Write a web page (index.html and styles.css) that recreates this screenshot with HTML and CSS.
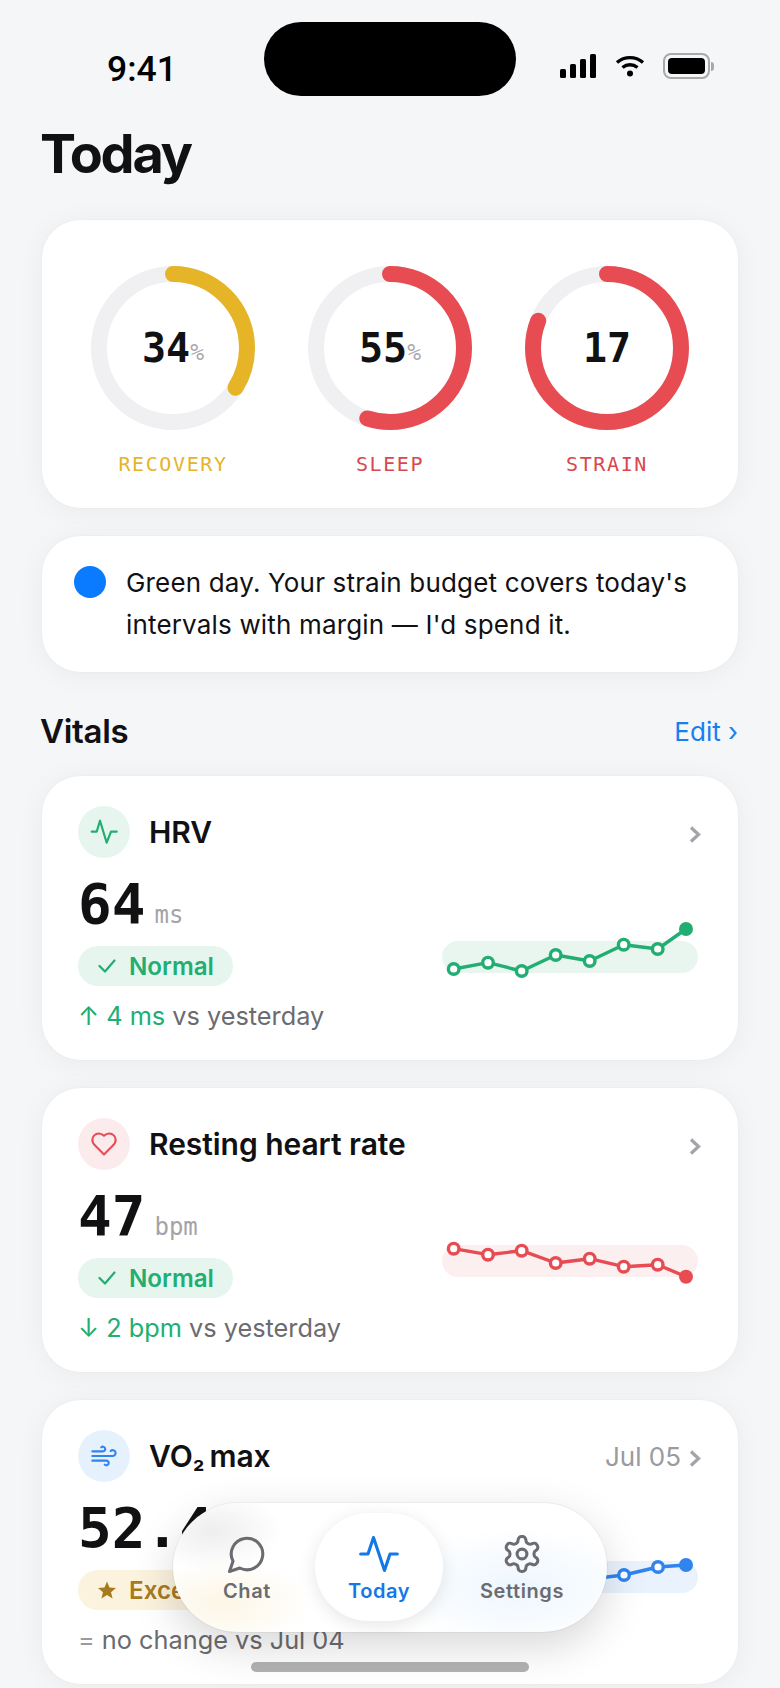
FILE: index.html
```html
<!DOCTYPE html>
<html>
<head>
  <meta charset="utf-8">
  <title>Today</title>
  <link rel="stylesheet" href="styles.css">
</head>
<body>
<div class="screen">

  <!-- status bar -->
  <div class="status-bar">
    <div class="status-time">9:41</div>
    <div class="island"></div>
    <div class="status-icons">
      <svg width="36" height="24" viewBox="0 0 36 24" fill="#000">
        <rect x="0" y="15" width="6" height="9" rx="1.5"/>
        <rect x="10" y="10" width="6" height="14" rx="1.5"/>
        <rect x="20" y="5" width="6" height="19" rx="1.5"/>
        <rect x="30" y="0" width="6" height="24" rx="1.5"/>
      </svg>
      <svg class="wifi" width="30" height="22" viewBox="0 0 30 22" fill="none" stroke="#000" stroke-width="3.4">
        <path d="M2 7.5C9.5 1 20.5 1 28 7.5"/>
        <path d="M7.5 12.5C12 8.8 18 8.8 22.500 12.500"/>
        <circle cx="15" cy="18.500" r="3" fill="#000" stroke="none"/>
      </svg>
      <div class="battery"><div class="battery-fill"></div></div>
      <div class="battery-nub"></div>
    </div>
  </div>

  <div class="content">
    <h1 class="title">Today</h1>

    <!-- score rings -->
    <div class="card score-card">
      <div class="score">
        <div class="ring">
          <svg width="164" height="164" viewBox="0 0 164 164">
            <circle class="ring-track" cx="82" cy="82" r="74"/>
            <circle class="ring-value yellow-stroke" cx="82" cy="82" r="74" pathLength="100" stroke-dasharray="34 100" transform="rotate(-90 82 82)"/>
          </svg>
          <div class="ring-text"><span class="ring-num">34</span><span class="ring-pct">%</span></div>
        </div>
        <div class="score-label yellow-text">RECOVERY</div>
      </div>
      <div class="score">
        <div class="ring">
          <svg width="164" height="164" viewBox="0 0 164 164">
            <circle class="ring-track" cx="82" cy="82" r="74"/>
            <circle class="ring-value red-stroke" cx="82" cy="82" r="74" pathLength="100" stroke-dasharray="55 100" transform="rotate(-90 82 82)"/>
          </svg>
          <div class="ring-text"><span class="ring-num">55</span><span class="ring-pct">%</span></div>
        </div>
        <div class="score-label red-text">SLEEP</div>
      </div>
      <div class="score">
        <div class="ring">
          <svg width="164" height="164" viewBox="0 0 164 164">
            <circle class="ring-track" cx="82" cy="82" r="74"/>
            <circle class="ring-value red-stroke" cx="82" cy="82" r="74" pathLength="100" stroke-dasharray="81 100" transform="rotate(-90 82 82)"/>
          </svg>
          <div class="ring-text"><span class="ring-num">17</span></div>
        </div>
        <div class="score-label red-text">STRAIN</div>
      </div>
    </div>

    <!-- coach message -->
    <div class="card insight">
      <div class="insight-dot"></div>
      <p class="insight-text">Green day. Your strain budget covers today's intervals with margin — I'd spend it.</p>
    </div>

    <div class="section-head">
      <h2 class="section-title">Vitals</h2>
      <div class="section-link">Edit ›</div>
    </div>

    <!-- HRV -->
    <div class="card vital">
      <div class="vital-head">
        <div class="vital-icon green-bg">
          <svg width="52" height="52" viewBox="0 0 52 52" fill="none" stroke="#22AE72" stroke-width="2.200" stroke-linecap="round" stroke-linejoin="round">
            <path d="M13.700 25.700H18.700L22 14.700L28.700 36.700L33 25.700H38.700"/>
          </svg>
        </div>
        <div class="vital-name">HRV</div>
        <svg class="chevron" width="12" height="17" viewBox="0 0 12 17" fill="none"><path d="M2 1.500L9.500 8.500L2 15.500"/></svg>
      </div>
      <div class="vital-body">
        <div class="vital-stats">
          <div class="value-row"><span class="value">64</span><span class="unit">ms</span></div>
          <div class="badge badge-green">
            <svg width="20" height="16" viewBox="0 0 20 16" fill="none" stroke="#22AE72" stroke-width="2.200" stroke-linecap="round" stroke-linejoin="round"><path d="M2.500 8L8 13.500L17.500 2.500"/></svg>
            Normal
          </div>
          <div class="delta"><span class="delta-good">↑ 4 ms</span> vs yesterday</div>
        </div>
        <svg class="spark spark-green" width="264" height="64" viewBox="0 0 264 64" fill="none">
          <rect class="spark-band" x="4" y="21" width="256" height="32" rx="16"/>
          <polyline points="15.700,49 50,42.700 83.700,51 117.700,35 151.700,41 185.700,24.700 219.700,29 248,9"/>
          <circle cx="15.700" cy="49" r="5.300"/><circle cx="50" cy="42.700" r="5.300"/><circle cx="83.700" cy="51" r="5.300"/><circle cx="117.700" cy="35" r="5.300"/><circle cx="151.700" cy="41" r="5.300"/><circle cx="185.700" cy="24.700" r="5.300"/><circle cx="219.700" cy="29" r="5.300"/>
          <circle class="spark-last" cx="248" cy="9" r="7"/>
        </svg>
      </div>
    </div>

    <!-- Resting heart rate -->
    <div class="card vital">
      <div class="vital-head">
        <div class="vital-icon red-bg">
          <svg width="28" height="28" viewBox="0 0 24 24" fill="none" stroke="#E74C53" stroke-width="1.800" stroke-linecap="round" stroke-linejoin="round">
            <path d="M19 14c1.490-1.460 3-3.210 3-5.500A5.500 5.500 0 0 0 16.500 3c-1.760 0-3 .5-4.500 2-1.500-1.500-2.740-2-4.500-2A5.500 5.500 0 0 0 2 8.500c0 2.300 1.500 4.050 3 5.500l7 7Z"/>
          </svg>
        </div>
        <div class="vital-name">Resting heart rate</div>
        <svg class="chevron" width="12" height="17" viewBox="0 0 12 17" fill="none"><path d="M2 1.500L9.500 8.500L2 15.500"/></svg>
      </div>
      <div class="vital-body">
        <div class="vital-stats">
          <div class="value-row"><span class="value">47</span><span class="unit">bpm</span></div>
          <div class="badge badge-green">
            <svg width="20" height="16" viewBox="0 0 20 16" fill="none" stroke="#22AE72" stroke-width="2.200" stroke-linecap="round" stroke-linejoin="round"><path d="M2.500 8L8 13.500L17.500 2.500"/></svg>
            Normal
          </div>
          <div class="delta"><span class="delta-good">↓ 2 bpm</span> vs yesterday</div>
        </div>
        <svg class="spark spark-red" width="264" height="64" viewBox="0 0 264 64" fill="none">
          <rect class="spark-band" x="4" y="13" width="256" height="32" rx="16"/>
          <polyline points="15.700,16.700 50,22.700 83.700,18.700 117.700,31 151.700,26.700 185.700,34.700 219.700,32.700 248,44.700"/>
          <circle cx="15.700" cy="16.700" r="5.300"/><circle cx="50" cy="22.700" r="5.300"/><circle cx="83.700" cy="18.700" r="5.300"/><circle cx="117.700" cy="31" r="5.300"/><circle cx="151.700" cy="26.700" r="5.300"/><circle cx="185.700" cy="34.700" r="5.300"/><circle cx="219.700" cy="32.700" r="5.300"/>
          <circle class="spark-last" cx="248" cy="44.700" r="7"/>
        </svg>
      </div>
    </div>

    <!-- VO2 max -->
    <div class="card vital">
      <div class="vital-head">
        <div class="vital-icon blue-bg">
          <svg width="28" height="28" viewBox="0 0 24 24" fill="none" stroke="#2F84EE" stroke-width="1.800" stroke-linecap="round" stroke-linejoin="round">
            <path d="M17.700 7.700a2.500 2.500 0 1 1 1.800 4.300H2"/>
            <path d="M9.600 4.600A2 2 0 1 1 11 8H2"/>
            <path d="M12.600 19.400A2 2 0 1 0 14 16H2"/>
          </svg>
        </div>
        <div class="vital-name">VO<span class="vital-sub">₂</span> max</div>
        <div class="vital-date">Jul 05</div>
        <svg class="chevron" width="12" height="17" viewBox="0 0 12 17" fill="none"><path d="M2 1.500L9.500 8.500L2 15.500"/></svg>
      </div>
      <div class="vital-body">
        <div class="vital-stats">
          <div class="value-row"><span class="value">52.4</span><span class="unit">ml/kg</span></div>
          <div class="badge badge-gold">
            <svg width="20" height="18" viewBox="0 0 20 18" fill="#A87A1E"><path d="M10 0.500L12.500 6.500L19 7L14 11.200L15.600 17.500L10 14.100L4.400 17.500L6 11.200L1 7L7.500 6.500Z"/></svg>
            Excellent
          </div>
          <div class="delta"><span class="delta-flat">=</span> no change vs Jul 04</div>
        </div>
        <svg class="spark spark-blue" width="264" height="64" viewBox="0 0 264 64" fill="none">
          <rect class="spark-band" x="4" y="17" width="256" height="32" rx="16"/>
          <polyline points="15.700,41 50,39 83.700,37 117.700,39 151.700,35 186,31 220,23 248,21"/>
          <circle cx="15.700" cy="41" r="5.300"/><circle cx="50" cy="39" r="5.300"/><circle cx="83.700" cy="37" r="5.300"/><circle cx="117.700" cy="39" r="5.300"/><circle cx="151.700" cy="35" r="5.300"/><circle cx="186" cy="31" r="5.300"/><circle cx="220" cy="23" r="5.300"/>
          <circle class="spark-last" cx="248" cy="21" r="7"/>
        </svg>
      </div>
    </div>
  </div>

  <!-- floating tab bar -->
  <div class="tabbar">
    <div class="tab">
      <svg width="42" height="42" viewBox="0 0 24 24" fill="none" stroke="#6B6B70" stroke-width="1.750" stroke-linecap="round" stroke-linejoin="round">
        <path d="M7.900 20A9 9 0 1 0 4 16.100L2 22Z"/>
      </svg>
      <span>Chat</span>
    </div>
    <div class="tab tab-active">
      <svg width="44" height="44" viewBox="0 0 24 24" fill="none" stroke="#1478E6" stroke-width="1.700" stroke-linecap="round" stroke-linejoin="round">
        <path d="M22 12h-4l-3 9L9 3l-3 9H2"/>
      </svg>
      <span>Today</span>
    </div>
    <div class="tab tab-last">
      <svg width="42" height="42" viewBox="0 0 24 24" fill="none" stroke="#6B6B70" stroke-width="1.750" stroke-linecap="round" stroke-linejoin="round">
        <path d="M12.220 2h-.44a2 2 0 0 0-2 2v.18a2 2 0 0 1-1 1.730l-.43.25a2 2 0 0 1-2 0l-.15-.08a2 2 0 0 0-2.730.73l-.22.38a2 2 0 0 0 .73 2.730l.15.1a2 2 0 0 1 1 1.720v.51a2 2 0 0 1-1 1.740l-.15.09a2 2 0 0 0-.73 2.730l.22.38a2 2 0 0 0 2.730.73l.15-.08a2 2 0 0 1 2 0l.43.25a2 2 0 0 1 1 1.730V20a2 2 0 0 0 2 2h.44a2 2 0 0 0 2-2v-.18a2 2 0 0 1 1-1.730l.43-.25a2 2 0 0 1 2 0l.15.08a2 2 0 0 0 2.730-.73l.22-.39a2 2 0 0 0-.73-2.730l-.15-.08a2 2 0 0 1-1-1.740v-.5a2 2 0 0 1 1-1.740l.15-.09a2 2 0 0 0 .73-2.730l-.22-.38a2 2 0 0 0-2.730-.73l-.15.08a2 2 0 0 1-2 0l-.43-.25a2 2 0 0 1-1-1.730V4a2 2 0 0 0-2-2z"/>
        <circle cx="12" cy="12" r="2.800"/>
      </svg>
      <span>Settings</span>
    </div>
  </div>

  <div class="home-bar"></div>
</div>
</body>
</html>
```

FILE: styles.css
```css
/* page */
* {
  box-sizing: border-box;
  margin: 0;
  padding: 0;
}

body {
  background-color: #F5F6F8;
  font-family: Inter, "Noto Sans", sans-serif;
  color: #111113;
}

.screen {
  position: relative;
  width: 780px;
  height: 1688px;
  overflow: hidden;
}

/* status bar */
.status-bar {
  display: grid;
  grid-template-columns: 264px 252px 264px;
  padding-top: 22px;
  height: 96px;
}

.status-time {
  padding: 28px 0 0 107px;
  font-family: Roboto, sans-serif;
  font-weight: 500;
  font-size: 35.5px;
  line-height: 38px;
  color: #000;
}

.island {
  height: 74px;
  border-radius: 37px;
  background-color: #000;
}

.status-icons {
  display: flex;
  align-items: center;
  padding: 22px 0 0 44px;
  height: 66px;
}

.wifi {
  margin-left: 19px;
}

.battery {
  margin-left: 18px;
  width: 47px;
  height: 26px;
  padding: 3px;
  border: 2px solid #A9A9A9;
  border-radius: 8px;
}

.battery-fill {
  height: 100%;
  border-radius: 4px;
  background-color: #000;
}

.battery-nub {
  margin-left: 1px;
  width: 3px;
  height: 9px;
  border-radius: 0 3px 3px 0;
  background-color: #A9A9A9;
}

/* main column */
.content {
  padding: 0 42px;
}

.title {
  margin: 28px 0 36px -2px;
  font-size: 54px;
  line-height: 60px;
  font-weight: 700;
  letter-spacing: -2.2px;
}

.card {
  background-color: #fff;
  border-radius: 38px;
  box-shadow: 0 3px 28px rgba(0, 0, 0, 0.05), 0 0 2px rgba(0, 0, 0, 0.05);
}

/* score rings */
.score-card {
  display: flex;
  justify-content: center;
  height: 288px;
  padding-top: 46px;
  margin-bottom: 28px;
}

.score {
  width: 217px;
  display: flex;
  flex-direction: column;
  align-items: center;
}

.ring {
  position: relative;
  width: 164px;
  height: 164px;
}

.ring-track,
.ring-value {
  fill: none;
  stroke-width: 16;
}

.ring-track {
  stroke: #F0F0F2;
}

.ring-value {
  stroke-linecap: round;
}

.yellow-stroke {
  stroke: #E5B427;
}

.red-stroke {
  stroke: #E74C53;
}

.ring-text {
  position: absolute;
  top: 0;
  left: 0;
  width: 100%;
  height: 100%;
  display: flex;
  align-items: center;
  justify-content: center;
  font-family: "DejaVu Sans Mono", monospace;
}

.ring-num {
  font-size: 40px;
  font-weight: 700;
}

.ring-pct {
  margin-top: 8px;
  font-size: 23px;
  color: #A8A8AD;
}

.score-label {
  margin-top: 22px;
  font-family: "DejaVu Sans Mono", monospace;
  font-size: 20px;
  line-height: 24px;
  letter-spacing: 1.6px;
}

.yellow-text {
  color: #E5B427;
}

.red-text {
  color: #D9474F;
}

/* coach message */
.insight {
  display: flex;
  gap: 20px;
  padding: 26px 32px;
  height: 136px;
}

.insight-dot {
  flex: none;
  width: 32px;
  height: 32px;
  margin-top: 4px;
  border-radius: 50%;
  background-color: #0A7AFF;
}

.insight-text {
  font-size: 26px;
  line-height: 42px;
  letter-spacing: 0.17px;
}

/* section heading */
.section-head {
  display: flex;
  justify-content: space-between;
  align-items: center;
  margin: 39px 0 25px;
  height: 40px;
}

.section-title {
  margin-left: -2px;
  font-size: 33px;
  line-height: 40px;
  font-weight: 600;
  letter-spacing: -0.3px;
}

.section-link {
  font-size: 26px;
  color: #1580F0;
}

/* vital cards */
.vital {
  height: 284px;
  padding: 30px 36px 0;
  margin-bottom: 28px;
}

.vital-head {
  display: flex;
  align-items: center;
  height: 52px;
}

.vital-icon {
  width: 52px;
  height: 52px;
  border-radius: 50%;
  display: flex;
  align-items: center;
  justify-content: center;
}

.green-bg {
  background-color: #E6F6EE;
}

.red-bg {
  background-color: #FCEBEC;
}

.blue-bg {
  background-color: #E6F1FE;
}

.vital-name {
  margin-left: 19px;
  font-size: 30px;
  font-weight: 600;
  letter-spacing: -0.05px;
  flex: 1;
}

.vital-sub {
  font-size: 26px;
  letter-spacing: -2.5px;
}

.vital-date {
  margin-right: 8px;
  font-size: 26px;
  color: #9A9A9F;
}

.chevron {
  margin: 5px 1px 0 0;
}

.chevron path {
  stroke: #A3A3A8;
  stroke-width: 3.2;
}

.vital-body {
  display: flex;
  justify-content: space-between;
  margin-top: 14px;
}

.value-row {
  height: 64px;
  line-height: 64px;
  font-family: "DejaVu Sans Mono", monospace;
}

.value {
  font-size: 56px;
  font-weight: 700;
}

.unit {
  margin-left: 9px;
  font-size: 24px;
  color: #A3A3A8;
}

.badge {
  display: inline-flex;
  align-items: center;
  gap: 12px;
  height: 40px;
  margin-top: 10px;
  padding: 0 19px 0 19px;
  border-radius: 20px;
  font-size: 24.2px;
  font-weight: 600;
}

.badge-green {
  background-color: #E6F6EE;
  color: #22AE72;
}

.badge-gold {
  background-color: #FBF3DE;
  color: #A87A1E;
}

.delta {
  margin-top: 12px;
  font-size: 25.3px;
  line-height: 36px;
  color: #6B6B70;
}

.delta-good {
  color: #22AE72;
}

.delta-flat {
  color: #9A9A9F;
}

/* sparklines */
.spark {
  flex: none;
  margin-top: 48px;
  overflow: visible;
}

.spark polyline {
  stroke-width: 3.4;
  stroke-linejoin: round;
}

.spark circle {
  fill: #fff;
  stroke-width: 3.4;
}

.spark .spark-band {
  stroke: none;
}

.spark .spark-last {
  stroke: none;
}

.spark-green {
  stroke: #22AE72;
}

.spark-green .spark-band {
  fill: #E8F6EF;
}

.spark-green .spark-last {
  fill: #22AE72;
}

.spark-red {
  stroke: #E74C53;
}

.spark-red .spark-band {
  fill: #FCEFEF;
}

.spark-red .spark-last {
  fill: #E74C53;
}

.spark-blue {
  stroke: #2F84EE;
}

.spark-blue .spark-band {
  fill: #E9F2FD;
}

.spark-blue .spark-last {
  fill: #2F84EE;
}

/* floating tab bar, tints stand in for the blurred card behind it */
.tabbar {
  position: absolute;
  left: 173px;
  bottom: 56px;
  width: 434px;
  height: 129px;
  padding: 10px;
  display: flex;
  gap: 4px;
  border-radius: 65px;
  background-color: #fff;
  background-image:
    radial-gradient(ellipse 70px 40px at 40px 28px, #EEEEEF, rgba(238, 238, 239, 0)),
    radial-gradient(ellipse 90px 45px at 50px 100px, #FCF6E6, rgba(252, 246, 230, 0)),
    radial-gradient(ellipse 130px 60px at 345px 85px, #EDF6FE, rgba(237, 246, 254, 0));
  box-shadow: 0 14px 44px rgba(0, 0, 0, 0.16), 0 0 0 1px rgba(0, 0, 0, 0.04);
}

.tab {
  width: 128px;
  height: 108px;
  border-radius: 54px;
  display: flex;
  flex-direction: column;
  align-items: center;
  padding-top: 20px;
  font-size: 20px;
  line-height: 24px;
  font-weight: 600;
  letter-spacing: 0.6px;
  color: #6B6B70;
}

.tab span {
  margin-top: 4px;
}

.tab-active {
  padding-top: 19px;
  background-color: #fff;
  box-shadow: 0 4px 18px rgba(0, 0, 0, 0.1);
  color: #1478E6;
}

.tab-active span {
  margin-top: 3px;
}

.tab-last {
  margin-left: 11px;
}

.home-bar {
  position: absolute;
  left: 251px;
  bottom: 16px;
  width: 278px;
  height: 10px;
  border-radius: 5px;
  background-color: rgba(0, 0, 0, 0.3);
}
```
